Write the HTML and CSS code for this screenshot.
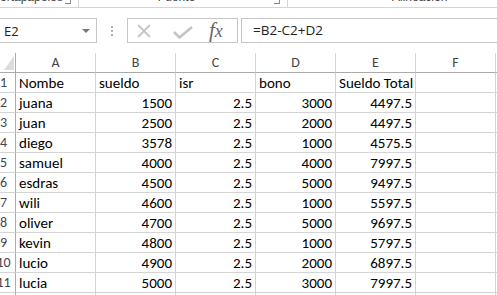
FILE: index.html
```html
<!DOCTYPE html>
<html lang="es">
<head>
    <meta charset="UTF-8">
    <title>Libro1 - Excel</title>
    <link rel="stylesheet" href="styles.css">
</head>
<body>
    <div class="ribbon">
        <div class="group group-clip">
            <span class="group-label">Portapapeles</span>
            <span class="launcher"></span>
        </div>
        <div class="group group-font">
            <span class="group-label">Fuente</span>
            <span class="launcher"></span>
        </div>
        <div class="group group-align">
            <span class="group-label">Alineación</span>
        </div>
    </div>

    <div class="formula-bar">
        <div class="name-box">
            <span>E2</span>
            <span class="arrow"></span>
        </div>
        <div class="grip"><i></i><i></i><i></i></div>
        <div class="fx-buttons">
            <svg class="icon-cancel" width="14" height="14" viewBox="0 0 14 14">
                <path d="M1 1 L13 13 M13 1 L1 13" stroke="#c4c4c4" stroke-width="1.8" fill="none"/>
            </svg>
            <svg class="icon-enter" width="20" height="13" viewBox="0 0 20 13">
                <path d="M1 6 L6.5 11.5 L19 1" stroke="#c4c4c4" stroke-width="2.6" fill="none"/>
            </svg>
            <span class="fx">f<span class="fx-x">x</span></span>
        </div>
        <div class="formula-input">=B2-C2+D2</div>
    </div>

    <div class="sheet">
        <div class="cell corner"></div>
        <div class="cell col-head">A</div>
        <div class="cell col-head">B</div>
        <div class="cell col-head">C</div>
        <div class="cell col-head">D</div>
        <div class="cell col-head">E</div>
        <div class="cell col-head">F</div>
        <div class="cell col-head">G</div>

        <div class="cell row-head">1</div>
        <div class="cell">Nombe</div>
        <div class="cell">sueldo</div>
        <div class="cell">isr</div>
        <div class="cell">bono</div>
        <div class="cell">Sueldo Total</div>
        <div class="cell"></div>
        <div class="cell"></div>

        <div class="cell row-head">2</div>
        <div class="cell">juana</div>
        <div class="cell num">1500</div>
        <div class="cell num">2.5</div>
        <div class="cell num">3000</div>
        <div class="cell num">4497.5</div>
        <div class="cell"></div>
        <div class="cell"></div>

        <div class="cell row-head">3</div>
        <div class="cell">juan</div>
        <div class="cell num">2500</div>
        <div class="cell num">2.5</div>
        <div class="cell num">2000</div>
        <div class="cell num">4497.5</div>
        <div class="cell"></div>
        <div class="cell"></div>

        <div class="cell row-head">4</div>
        <div class="cell">diego</div>
        <div class="cell num">3578</div>
        <div class="cell num">2.5</div>
        <div class="cell num">1000</div>
        <div class="cell num">4575.5</div>
        <div class="cell"></div>
        <div class="cell"></div>

        <div class="cell row-head">5</div>
        <div class="cell">samuel</div>
        <div class="cell num">4000</div>
        <div class="cell num">2.5</div>
        <div class="cell num">4000</div>
        <div class="cell num">7997.5</div>
        <div class="cell"></div>
        <div class="cell"></div>

        <div class="cell row-head">6</div>
        <div class="cell">esdras</div>
        <div class="cell num">4500</div>
        <div class="cell num">2.5</div>
        <div class="cell num">5000</div>
        <div class="cell num">9497.5</div>
        <div class="cell"></div>
        <div class="cell"></div>

        <div class="cell row-head">7</div>
        <div class="cell">wili</div>
        <div class="cell num">4600</div>
        <div class="cell num">2.5</div>
        <div class="cell num">1000</div>
        <div class="cell num">5597.5</div>
        <div class="cell"></div>
        <div class="cell"></div>

        <div class="cell row-head">8</div>
        <div class="cell">oliver</div>
        <div class="cell num">4700</div>
        <div class="cell num">2.5</div>
        <div class="cell num">5000</div>
        <div class="cell num">9697.5</div>
        <div class="cell"></div>
        <div class="cell"></div>

        <div class="cell row-head">9</div>
        <div class="cell">kevin</div>
        <div class="cell num">4800</div>
        <div class="cell num">2.5</div>
        <div class="cell num">1000</div>
        <div class="cell num">5797.5</div>
        <div class="cell"></div>
        <div class="cell"></div>

        <div class="cell row-head">10</div>
        <div class="cell">lucio</div>
        <div class="cell num">4900</div>
        <div class="cell num">2.5</div>
        <div class="cell num">2000</div>
        <div class="cell num">6897.5</div>
        <div class="cell"></div>
        <div class="cell"></div>

        <div class="cell row-head">11</div>
        <div class="cell">lucia</div>
        <div class="cell num">5000</div>
        <div class="cell num">2.5</div>
        <div class="cell num">3000</div>
        <div class="cell num">7997.5</div>
        <div class="cell"></div>
        <div class="cell"></div>

        <div class="cell row-head">12</div>
        <div class="cell"></div>
        <div class="cell"></div>
        <div class="cell"></div>
        <div class="cell"></div>
        <div class="cell"></div>
        <div class="cell"></div>
        <div class="cell"></div>
    </div>
</body>
</html>
```

FILE: styles.css
```css
body {
    margin: 0;
    width: 497px;
    height: 295px;
    overflow: hidden;
    background-color: #fff;
    font-family: Carlito, Calibri, "Liberation Sans", sans-serif;
    color: #000;
}

/* ribbon strip, only the group labels are left on screen */
.ribbon {
    display: flex;
    height: 7px;
    overflow: hidden;
    border-bottom: 1px solid #d5d5d5;
    font-family: "Liberation Sans", Arial, sans-serif;
    font-size: 12px;
    color: #444;
}

.group {
    display: flex;
    align-items: flex-start;
    height: 7px;
    border-right: 1px solid #d5d5d5;
    box-sizing: border-box;
}

.group-label {
    margin-top: -10px;
    line-height: 14px;
    white-space: nowrap;
}

.group-clip {
    width: 79px;
}

.group-clip .group-label {
    margin-left: -8px;
}

.group-font {
    width: 209px;
}

.group-font .group-label {
    flex: 1;
    text-align: center;
}

.group-align {
    border-right: none;
    padding-left: 104px;
}

.launcher {
    width: 5px;
    height: 3px;
    margin: 0 7px 0 auto;
    border-right: 1px solid #8a8a8a;
    border-bottom: 1px solid #8a8a8a;
}

.group-font .launcher {
    margin-left: 0;
}

/* formula bar */
.formula-bar {
    display: flex;
    align-items: center;
    height: 25px;
    margin-top: 10px;
}

.name-box {
    display: flex;
    align-items: center;
    box-sizing: border-box;
    width: 98px;
    height: 25px;
    margin-left: -1px;
    padding-left: 4px;
    border: 1px solid #c6c6c6;
    font-family: "Open Sans", "Liberation Sans", sans-serif;
    font-size: 13px;
    color: #222;
}

.arrow {
    margin-left: auto;
    margin-right: 6px;
    border-left: 4px solid transparent;
    border-right: 4px solid transparent;
    border-top: 4px solid #777;
}

.grip {
    display: flex;
    flex-direction: column;
    gap: 2px;
    margin: 0 14px 0 14px;
}

.grip i {
    width: 2px;
    height: 2px;
    background-color: #b0b0b0;
}

.fx-buttons {
    display: flex;
    align-items: center;
    box-sizing: border-box;
    width: 111px;
    height: 25px;
    padding-left: 9px;
    border: 1px solid #c6c6c6;
}

.icon-cancel {
    margin-top: 1px;
}

.icon-enter {
    margin-left: 22px;
    margin-top: 3px;
}

.fx {
    margin-left: 16px;
    font-family: "Liberation Serif", "DejaVu Serif", serif;
    font-style: italic;
    font-size: 21px;
    color: #666;
    line-height: 21px;
}

.fx-x {
    font-size: 18px;
}

.formula-input {
    flex: 1;
    box-sizing: border-box;
    height: 25px;
    margin-left: 3px;
    margin-right: -4px;
    padding-left: 11px;
    border: 1px solid #c6c6c6;
    font-family: "Open Sans", "Liberation Sans", sans-serif;
    font-size: 13.5px;
    line-height: 23px;
    color: #222;
}

/* worksheet */
.sheet {
    display: grid;
    grid-template-columns: 24px repeat(7, 80px);
    grid-auto-rows: 20px;
    margin-top: 10px;
    margin-left: -8px;
}

.cell {
    box-sizing: border-box;
    padding: 0 3px;
    border-right: 1px solid #d4d4d4;
    border-bottom: 1px solid #d4d4d4;
    font-size: 15px;
    line-height: 20px;
    white-space: nowrap;
    overflow: hidden;
}

.num {
    text-align: right;
}

.col-head {
    text-align: center;
    font-size: 14px;
    color: #444;
    border-bottom-color: #ababab;
}

.row-head {
    padding: 0;
    text-align: center;
    font-size: 14px;
    color: #3f4652;
    border-right-color: #ababab;
}

.corner {
    position: relative;
    border-right-color: #ababab;
    border-bottom-color: #ababab;
}

.corner::after {
    content: "";
    position: absolute;
    left: 12px;
    top: 3px;
    width: 10px;
    height: 14px;
    background-color: #dcdcdc;
    clip-path: polygon(100% 0, 100% 100%, 0 100%);
}
```
